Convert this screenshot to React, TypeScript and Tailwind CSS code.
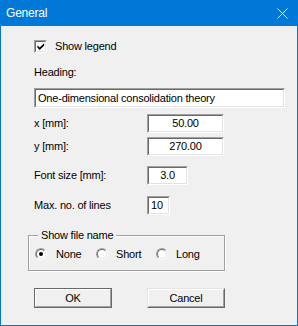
import type { ReactNode } from 'react';

function Sunken({ className, children }: { className: string; children?: ReactNode }) {
  return (
    <div className={`border border-t-[#a0a0a0] border-l-[#a0a0a0] border-b-white border-r-white ${className}`}>
      <div className="h-full w-full border border-t-[#696969] border-l-[#696969] border-b-[#e3e3e3] border-r-[#e3e3e3] bg-white flex items-center">
        {children}
      </div>
    </div>
  );
}

function Radio({ checked }: { checked?: boolean }) {
  return (
    <div className="w-[12px] h-[12px] rounded-full border border-t-[#a0a0a0] border-l-[#a0a0a0] border-b-white border-r-white">
      <div className="w-full h-full rounded-full border border-t-[#696969] border-l-[#696969] border-b-[#e3e3e3] border-r-[#e3e3e3] bg-white flex items-center justify-center">
        {checked && <div className="w-[4px] h-[4px] rounded-full bg-black" />}
      </div>
    </div>
  );
}

function FieldRow({ label, width, value, align }: { label: string; width: string; value: string; align: 'center' | 'left' }) {
  return (
    <div className="flex items-center">
      <span className="w-[113px] leading-[13px]">{label}</span>
      <Sunken className={`${width} h-[19px]`}>
        <span className={`w-full leading-[13px] ${align === 'center' ? 'text-center' : 'pl-[2px]'}`}>{value}</span>
      </Sunken>
    </div>
  );
}

export default function App() {
  return (
    <div className="w-[298px] h-[326px] bg-[#0078d7] px-px pb-px flex flex-col font-['Liberation_Sans',Arial,sans-serif] text-[11px] tracking-[-0.2px] text-black select-none">
      {/* Title bar */}
      <div className="h-[26px] flex items-center justify-between pl-[5px] pr-[9px] text-white text-[12px]">
        <span>General</span>
        <svg width="11" height="11" viewBox="0 0 11 11">
          <path d="M0.5 0.5L10.5 10.5M10.5 0.5L0.5 10.5" stroke="white" strokeWidth="1" />
        </svg>
      </div>

      <div className="flex-1 bg-[#f0f0f0] pl-[33px] pt-[14px] flex flex-col">
        {/* Show legend */}
        <div className="flex items-center h-[13px]">
          <Sunken className="w-[13px] h-[13px]">
            <svg width="9" height="9" viewBox="0 0 9 9" className="ml-[1px]">
              <path d="M0.5 3.2L3 5.6L8 0.8L8 3.6L3 8.4L0.5 6Z" fill="black" />
            </svg>
          </Sunken>
          <span className="ml-[8px] leading-[13px]">Show legend</span>
        </div>

        <span className="mt-[13px] leading-[13px]">Heading:</span>

        <Sunken className="mt-[9px] w-[251px] h-[20px]">
          <span className="pl-[2px] leading-[13px]">One-dimensional consolidation theory</span>
        </Sunken>

        <div className="mt-[6px]">
          <FieldRow label="x [mm]:" width="w-[77px]" value="50.00" align="center" />
        </div>
        <div className="mt-[4px]">
          <FieldRow label="y [mm]:" width="w-[77px]" value="270.00" align="center" />
        </div>
        <div className="mt-[10px]">
          <FieldRow label="Font size [mm]:" width="w-[41px]" value="3.0" align="center" />
        </div>
        <div className="mt-[11px]">
          <FieldRow label="Max. no. of lines" width="w-[23px]" value="10" align="left" />
        </div>

        {/* Show file name group */}
        <div className="relative mt-[20px] ml-[-6px] w-[197px] h-[36px] border border-[#a0a0a0] shadow-[1px_1px_0_#fff,inset_1px_1px_0_#fff] flex items-center pl-[6px] pt-[2px]">
          <span className="absolute top-[-7px] left-[9px] px-[3px] bg-[#f0f0f0] leading-[13px]">Show file name</span>
          <div className="w-[61px] flex items-center">
            <Radio checked />
            <span className="ml-[9px] leading-[13px]">None</span>
          </div>
          <div className="w-[60px] flex items-center">
            <Radio />
            <span className="ml-[8px] leading-[13px]">Short</span>
          </div>
          <div className="flex items-center">
            <Radio />
            <span className="ml-[8px] leading-[13px]">Long</span>
          </div>
        </div>

        {/* Buttons */}
        <div className="mt-[17px] flex">
          <div className="w-[78px] h-[20px] border border-[#696969]">
            <div className="w-full h-full border border-t-white border-l-white border-b-[#a0a0a0] border-r-[#a0a0a0] flex items-center justify-center leading-[13px]">
              OK
            </div>
          </div>
          <div className="ml-[35px] w-[78px] h-[20px] border border-t-[#e3e3e3] border-l-[#e3e3e3] border-b-[#696969] border-r-[#696969]">
            <div className="w-full h-full border border-t-white border-l-white border-b-[#a0a0a0] border-r-[#a0a0a0] flex items-center justify-center leading-[13px]">
              Cancel
            </div>
          </div>
        </div>
      </div>
    </div>
  );
}
